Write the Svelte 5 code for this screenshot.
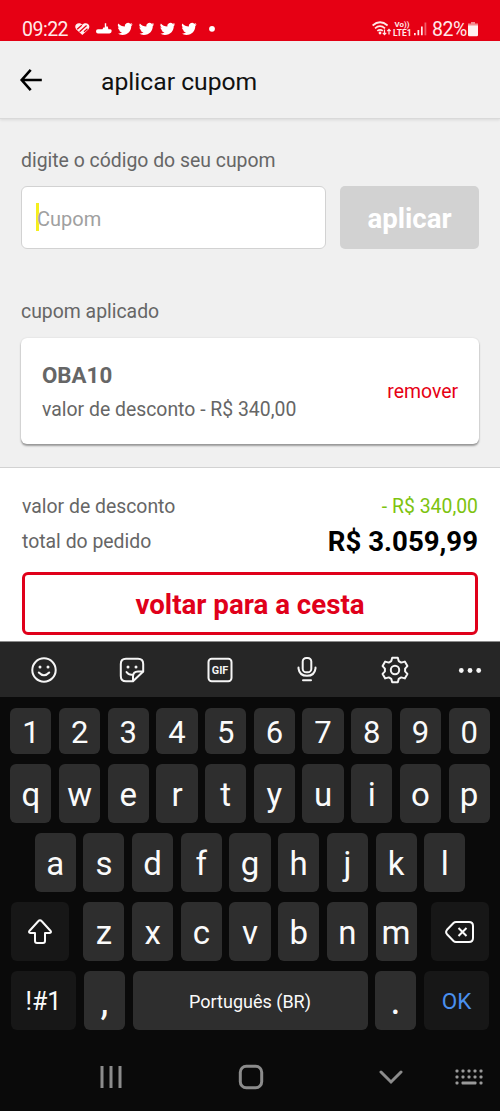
<script lang="ts">
  const digits = [...'1234567890'];
  const topRow = [...'qwertyuiop'];
  const homeRow = [...'asdfghjkl'];
  const bottomRow = [...'zxcvbnm'];

  let coupon = '';
  let applied: { code: string; discount: string } | null = { code: 'OBA10', discount: 'R$ 340,00' };
  let shift = false;

  function type(char: string) {
    coupon += shift ? char.toUpperCase() : char;
    shift = false;
  }

  function erase() {
    coupon = coupon.slice(0, -1);
  }

  function removeCoupon() {
    applied = null;
  }
</script>

<div class="phone">
  <div class="status">
    <span class="clock">09:22</span>
    <svg class="notifications" width="150" height="16" viewBox="0 0 150 16">
      <path d="M8.300 14L2.300 8.400C-1 4.500 4 0 8.300 3.700C12.600 0 17.600 4.500 14.300 8.400Z" fill="#fff0f0" />
      <path d="M3.200 8.200L7.800 4.200M5.600 10.700L12.600 4.600M10 10.800L13.500 7.700" stroke="#e60014" stroke-width="1.300" />
      <g fill="#fff">
        <path d="M24 8.200h4.500l.8-1.700h1.500V2.200h1.400v3.300h1.600l.6 2.700h1.800q1.600 0 1.500 1.900-.2 2.400-2.200 2.400H24q-2 0-2-2.200 0-2.100 2-2.100z" />
        {#each [43.500, 65, 86, 107.500] as x}
          <path transform="translate({x} .2) scale(.64 .62)" d="M23.600 4.900a10 10 0 0 1-2.800.8 5 5 0 0 0 2.200-2.700c-1 .6-2 1-3.100 1.200a4.900 4.900 0 0 0-8.400 4.500C7.400 8.500 3.800 6.500 1.400 3.600a4.900 4.900 0 0 0 1.500 6.600 5 5 0 0 1-2.200-.6c0 2.300 1.600 4.400 3.900 4.900a5 5 0 0 1-2.200.1 4.900 4.900 0 0 0 4.600 3.400A9.900 9.900 0 0 1 0 20a14 14 0 0 0 7.500 2.200c9.100 0 14.300-7.700 14-14.600.9-.7 1.600-1.600 2.100-2.700z" />
        {/each}
        <circle cx="138" cy="7.800" r="2.900" />
      </g>
    </svg>
    <svg class="signal" width="56" height="18" viewBox="0 0 56 18" fill="none" stroke="#ffe9e9">
      <path d="M.6 5.500Q8-1 15.600 5.500M3 8.300Q8 4 13 8.300M5.300 10.900Q8 8.700 10.800 10.900" stroke-width="1.700" />
      <circle cx="8" cy="13" r="1.400" fill="#ffe9e9" stroke="none" />
      <path d="M12.500 9.500v5m-1.700-1.700 1.700 1.900 1.700-1.900M17 14.500v-5m-1.700 1.700L17 9.300l1.700 1.900" stroke-width="1.200" />
      <g fill="#ffe9e9" stroke="none">
        <text x="22.500" y="7" font-size="8" font-weight="700" textLength="15" lengthAdjust="spacingAndGlyphs">Vo))</text>
        <text x="21" y="15.500" font-size="9" font-weight="700" textLength="18.500" lengthAdjust="spacingAndGlyphs">LTE1</text>
        <path d="M42 13h1.700v2.300H42zM45.500 10h1.700v5.300h-1.700zM49 6.500h1.700v8.800H49z" />
        <path d="M52.500 2.500h1.800v12.800h-1.800z" opacity=".4" />
      </g>
    </svg>
    <span class="percent">82%</span>
    <svg class="battery" width="10" height="15" viewBox="0 0 10 15">
      <path d="M3 0h4v1.500h3V4H0V1.500h3z" fill="#f58a8f" />
      <path d="M0 3.500h10V13q0 1.200-1.200 1.200H1.200Q0 14.200 0 13z" fill="#fff0f0" />
    </svg>
  </div>

  <header>
    <svg width="24" height="24" viewBox="0 0 24 24" fill="none" stroke="#000" stroke-width="2.600">
      <path d="M12.700 1.800L3.700 12l9 10.200M3.700 12H23.800" />
    </svg>
    <h1>aplicar cupom</h1>
  </header>

  <main>
    <label for="coupon">digite o código do seu cupom</label>
    <div class="entry">
      <div class="field" id="coupon">
        <span class="caret"></span>
        <span class="value" class:placeholder={!coupon}>{coupon || 'Cupom'}</span>
      </div>
      <button class="apply">aplicar</button>
    </div>

    {#if applied}
      <p class="section">cupom aplicado</p>
      <div class="card">
        <div>
          <strong>{applied.code}</strong>
          <p>valor de desconto - {applied.discount}</p>
        </div>
        <button class="remove" on:click={removeCoupon}>remover</button>
      </div>
    {/if}
  </main>

  <section class="summary">
    <div class="line">
      <span>valor de desconto</span>
      <span class="discount">- R$ 340,00</span>
    </div>
    <div class="line total">
      <span>total do pedido</span>
      <strong>R$ 3.059,99</strong>
    </div>
    <button class="back">voltar para a cesta</button>
  </section>

  <div class="toolbar">
    <svg width="28" height="28" viewBox="0 0 28 28">
      <circle cx="14" cy="14" r="11.700" />
      <path d="M8.800 16.500q5.200 5.500 10.400 0" />
      <g class="solid"><circle cx="10" cy="11" r="1.500" /><circle cx="18" cy="11" r="1.500" /></g>
    </svg>
    <svg width="28" height="28" viewBox="0 0 28 28">
      <path d="M15 25.300H8Q2.800 25.300 2.800 20V8Q2.800 2.700 8 2.700h12q5.200 0 5.200 5.300v7.500L15 25.300z" />
      <path d="M15 25v-4.500q0-5 5-5h5M8.500 16q2.500 3.500 6.500 2.700" />
      <g class="solid"><circle cx="10" cy="11" r="1.500" /><circle cx="18" cy="11" r="1.500" /></g>
    </svg>
    <svg width="28" height="28" viewBox="0 0 28 28">
      <rect x="2.500" y="2.700" width="23" height="22.600" rx="3.200" />
      <text x="5.800" y="17.900" font-size="11.500" font-weight="700" textLength="16.500" lengthAdjust="spacingAndGlyphs">GIF</text>
    </svg>
    <svg width="28" height="28" viewBox="0 0 28 28">
      <rect x="9.700" y="2" width="8.600" height="14.300" rx="3.600" />
      <path d="M5.500 11.500v1q1 7.300 8.500 7.300t8.500-7.300v-1M10 24.300h8" />
    </svg>
    <svg width="28" height="28" viewBox="0 0 28 28">
      <path d="M11.200 1.800h5.600l.9 3.300 2.500 1.500 3.600-1 2.600 4.500-2.300 2.500v2.800l2.300 2.500-2.600 4.500-3.600-1-2.500 1.500-.9 3.300h-5.600l-.9-3.300-2.500-1.500-3.600 1-2.600-4.500 2.300-2.500v-2.800l-2.300-2.500 2.600-4.500 3.600 1 2.500-1.500z" />
      <circle cx="14" cy="14" r="4.200" />
    </svg>
    <svg width="24" height="28" viewBox="0 0 24 28">
      <g class="solid"><circle cx="3.300" cy="14.500" r="2.400" /><circle cx="12" cy="14.500" r="2.400" /><circle cx="20.700" cy="14.500" r="2.400" /></g>
    </svg>
  </div>

  <div class="keyboard">
    <div class="row numbers">
      {#each digits as key}
        <button class="key" on:click={() => type(key)}>{key}</button>
      {/each}
    </div>
    <div class="row">
      {#each topRow as key}
        <button class="key" on:click={() => type(key)}>{key}</button>
      {/each}
    </div>
    <div class="row">
      {#each homeRow as key}
        <button class="key" on:click={() => type(key)}>{key}</button>
      {/each}
    </div>
    <div class="row">
      <button class="key dark shift" aria-label="shift" on:click={() => (shift = !shift)}>
        <svg width="26" height="28" viewBox="0 0 26 28">
          <path d="M13 2.300q1 0 1.800 1l8.600 9.400q1.500 2-.8 2.200H18v8q0 2-2 2h-6q-2 0-2-2v-8H3.400q-2.300-.2-.8-2.200l8.600-9.400q.8-1 1.800-1z" />
        </svg>
      </button>
      {#each bottomRow as key}
        <button class="key" on:click={() => type(key)}>{key}</button>
      {/each}
      <button class="key dark erase" aria-label="apagar" on:click={erase}>
        <svg width="30" height="24" viewBox="0 0 30 24">
          <path d="M11 2h13q4 0 4 4v12q0 4-4 4H11q-1.500 0-2.500-1L2 14.200q-1.800-2.200 0-4.400L8.500 3q1-1 2.500-1zM13.500 8l8 8m0-8l-8 8" />
        </svg>
      </button>
    </div>
    <div class="row">
      <button class="key dark symbols">!#1</button>
      <button class="key punct" on:click={() => type(',')}>,</button>
      <button class="key space" on:click={() => type(' ')}>Português (BR)</button>
      <button class="key punct" on:click={() => type('.')}>.</button>
      <button class="key dark ok">OK</button>
    </div>
  </div>

  <nav>
    <svg width="24" height="24" viewBox="0 0 24 24">
      <path d="M3 1v22M12 1v22M21 1v22" />
    </svg>
    <svg width="26" height="26" viewBox="0 0 26 26">
      <rect x="2.300" y="2.300" width="21.400" height="21.400" rx="6" />
    </svg>
    <svg width="24" height="24" viewBox="0 0 24 24">
      <path d="M2 7l10 10L22 7" stroke-linecap="round" />
    </svg>
    <svg class="dots" width="28" height="18" viewBox="0 0 28 18">
      {#each [0, 1, 2, 3, 4] as col}
        <rect x={0.5 + col * 6} y="1.500" width="3" height="3" rx="1" />
        <rect x={0.5 + col * 6} y="7.500" width="3" height="3" rx="1" />
      {/each}
      <rect x=".5" y="13.500" width="3" height="3" rx="1" />
      <rect x="6.500" y="13.500" width="15" height="3" rx="1" />
      <rect x="24.500" y="13.500" width="3" height="3" rx="1" />
    </svg>
  </nav>
</div>

<style>
  .phone {
    width: 500px;
    height: 1111px;
    display: flex;
    flex-direction: column;
    overflow: hidden;
    background: #f0f0f0;
    color: #666;
    font-family: Roboto, sans-serif;
    font-size: 19.400px;
  }

  * {
    box-sizing: border-box;
  }

  svg {
    display: block;
    flex: none;
  }

  h1,
  p {
    margin: 0;
    font-weight: 400;
  }

  button {
    padding: 0;
    border: 0;
    background: none;
    color: inherit;
    font: inherit;
  }

  .status {
    height: 41px;
    flex: none;
    display: flex;
    align-items: center;
    padding: 17px 22px 0;
    background: #e60014;
    color: #ffeaea;
    white-space: nowrap;
  }

  .clock {
    width: 52px;
  }

  .clock,
  .percent {
    padding-top: 1px;
    font-size: 19.500px;
    letter-spacing: -0.500px;
  }

  .signal {
    margin-left: auto;
  }

  .percent {
    width: 36px;
    margin-left: 4px;
  }

  .battery {
    margin-top: 1px;
  }

  header {
    height: 78px;
    flex: none;
    display: flex;
    align-items: center;
    gap: 59px;
    padding-left: 18px;
    border-bottom: 1px solid #d9d9d9;
    box-shadow: 0 1px 3px rgba(0, 0, 0, 0.1);
    color: #111;
  }

  h1 {
    padding-top: 3px;
    font-size: 24.700px;
  }

  main {
    height: 349px;
    flex: none;
    padding: 30px 21px 0;
    border-bottom: 1px solid #d2d2d2;
  }

  label,
  .section {
    display: block;
    line-height: 24px;
  }

  .entry {
    display: flex;
    gap: 14px;
    margin: 13px 0 51px;
  }

  .field {
    width: 305px;
    height: 63px;
    display: flex;
    align-items: center;
    padding-left: 14px;
    border: 1px solid #d2d2d2;
    border-radius: 6px;
    background: #fff;
  }

  .caret {
    width: 3px;
    height: 28px;
    margin: -2px -2px 0 0;
    background: #f5ee1e;
  }

  .value {
    margin-top: 2px;
    font-size: 20px;
  }

  .placeholder {
    color: #a0a0a0;
  }

  .apply {
    flex: 1;
    padding-top: 2px;
    border-radius: 5px;
    background: #d2d2d2;
    color: #fff;
    font-size: 27.600px;
    font-weight: 700;
  }

  .card {
    height: 106px;
    display: flex;
    align-items: center;
    justify-content: space-between;
    margin-top: 14px;
    padding: 1px 21px 0;
    border-radius: 6px;
    background: #fff;
    box-shadow: 0 2px 2px rgba(0, 0, 0, 0.35), 0 0 2px rgba(0, 0, 0, 0.12);
  }

  .card strong {
    display: block;
    font-size: 22.300px;
    line-height: 28px;
  }

  .card p {
    margin-top: 9px;
    line-height: 24px;
  }

  .remove {
    color: #e60014;
  }

  .summary {
    height: 174px;
    flex: none;
    padding: 26px 22px 0;
    border-bottom: 1px solid #8c8c8c;
    background: #fff;
  }

  .line {
    display: flex;
    align-items: center;
    justify-content: space-between;
    height: 24px;
  }

  .total {
    margin: 11px 0 19px;
  }

  .total strong {
    color: #000;
    font-size: 27.600px;
  }

  .discount {
    color: #7dc30f;
  }

  .back {
    width: 100%;
    height: 63px;
    padding-top: 2px;
    border: 3px solid #e0001a;
    border-radius: 6px;
    color: #e0001a;
    font-size: 27.700px;
    font-weight: 700;
  }

  .toolbar {
    height: 55px;
    flex: none;
    display: flex;
    align-items: center;
    gap: 59.800px;
    padding-left: 30px;
    background: #262626;
  }

  .toolbar svg {
    fill: none;
    stroke: #f5f5f5;
    stroke-width: 2;
    stroke-linejoin: round;
    stroke-linecap: round;
  }

  .toolbar svg:last-child {
    margin-left: -11px;
  }

  .toolbar .solid,
  .toolbar text {
    fill: #f5f5f5;
    stroke: none;
  }

  .keyboard {
    flex: none;
    display: flex;
    flex-direction: column;
    gap: 9.800px;
    padding: 11px 10.500px 0 10.500px;
    background: #0a0a0a;
  }

  .row {
    display: flex;
    justify-content: center;
    gap: 7.600px;
    height: 59.200px;
  }

  .numbers {
    height: 46px;
  }

  .key {
    width: 41.100px;
    flex: none;
    display: flex;
    align-items: center;
    justify-content: center;
    padding-top: 2px;
    border-radius: 6px;
    background: #2e2e2e;
    color: #fafafa;
    font-size: 33px;
  }

  .numbers .key {
    font-size: 31px;
  }

  .dark {
    background: #171717;
  }

  .dark svg {
    fill: none;
    stroke: #fafafa;
    stroke-width: 2;
    stroke-linejoin: round;
  }

  .shift {
    width: 58px;
    margin-right: 6.500px;
  }

  .erase {
    width: 58px;
    margin-left: 6.500px;
  }

  .symbols,
  .ok {
    width: 65.500px;
    font-size: 25px;
  }

  .ok {
    color: #4a90ee;
    font-size: 22.500px;
  }

  .punct {
    padding-top: 0;
    font-size: 40px;
  }

  .space {
    width: 235px;
    font-size: 18px;
  }

  nav {
    flex: 1;
    display: flex;
    align-items: center;
    padding: 14px 17px 0 99px;
    background: #0a0a0a;
  }

  nav svg {
    margin-right: 115px;
    fill: none;
    stroke: #8c8c8c;
    stroke-width: 3;
  }

  nav .dots {
    margin: 0 0 0 auto;
    fill: #9a9a9a;
    stroke: none;
  }

  nav svg:nth-child(3) {
    margin-right: 0;
  }
</style>
